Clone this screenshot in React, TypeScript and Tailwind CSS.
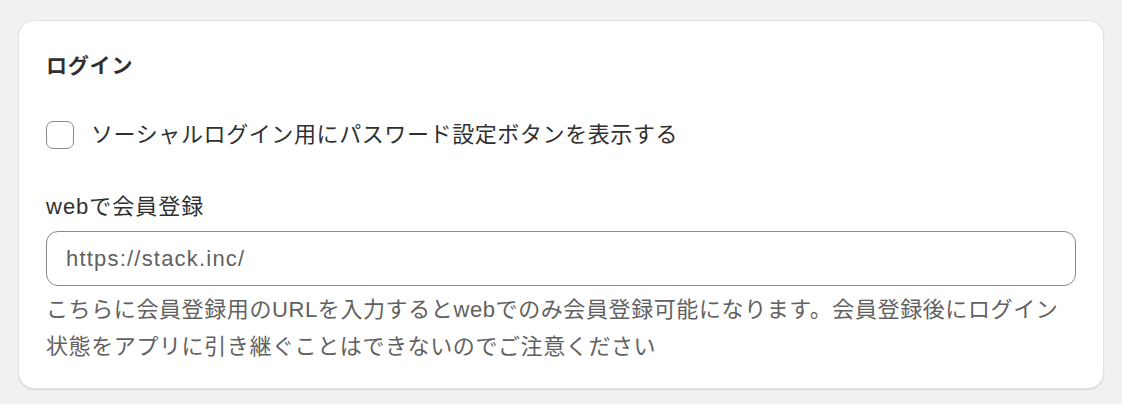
import { useState } from "react";

const font = {
  fontFamily: '"Liberation Sans", "Noto Sans CJK JP", sans-serif',
};

export default function App() {
  const [checked, setChecked] = useState(false);
  const [url, setUrl] = useState("");

  return (
    <div className="min-h-screen bg-[#f1f1f1] px-[18px] pt-[20px]" style={font}>
      <div className="w-[1086px] rounded-[16px] border border-[#e3e3e3] bg-white px-[27px] pt-[31px] pb-[23px] shadow-[0_1px_1px_rgba(0,0,0,0.12)]">
        <h2 className="text-[21px] font-bold leading-[28px] tracking-[0.8px] text-[#303030]">ログイン</h2>

        <label className="mt-[41px] flex cursor-pointer items-center gap-[17px]">
          <input
            type="checkbox"
            checked={checked}
            onChange={(e) => setChecked(e.target.checked)}
            className="h-[28px] w-[28px] shrink-0 cursor-pointer appearance-none rounded-[7px] border-[1.5px] border-[#8a8a8a] bg-white checked:bg-[#303030]"
          />
          <span className="text-[22px] leading-[28px] tracking-[0.6px] text-[#303030]">
            ソーシャルログイン用にパスワード設定ボタンを表示する
          </span>
        </label>

        <div className="mt-[42px]">
          <label htmlFor="signup-url" className="block text-[22px] leading-[32px] tracking-[1px] text-[#303030]">
            webで会員登録
          </label>
          <input
            id="signup-url"
            value={url}
            onChange={(e) => setUrl(e.target.value)}
            placeholder="https://stack.inc/"
            className="mt-[8px] block h-[55px] w-full rounded-[12px] border border-[#8a8a8a] px-[19px] text-[22px] tracking-[1.2px] text-[#303030] outline-none placeholder:text-[#616161]"
          />
          <p className="mt-[5px] text-[22px] leading-[37px] tracking-[0.6px] text-[#616161]">
            こちらに会員登録用のURLを入力するとwebでのみ会員登録可能になります。会員登録後にログイン状態をアプリに引き継ぐことはできないのでご注意ください
          </p>
        </div>
      </div>
    </div>
  );
}
